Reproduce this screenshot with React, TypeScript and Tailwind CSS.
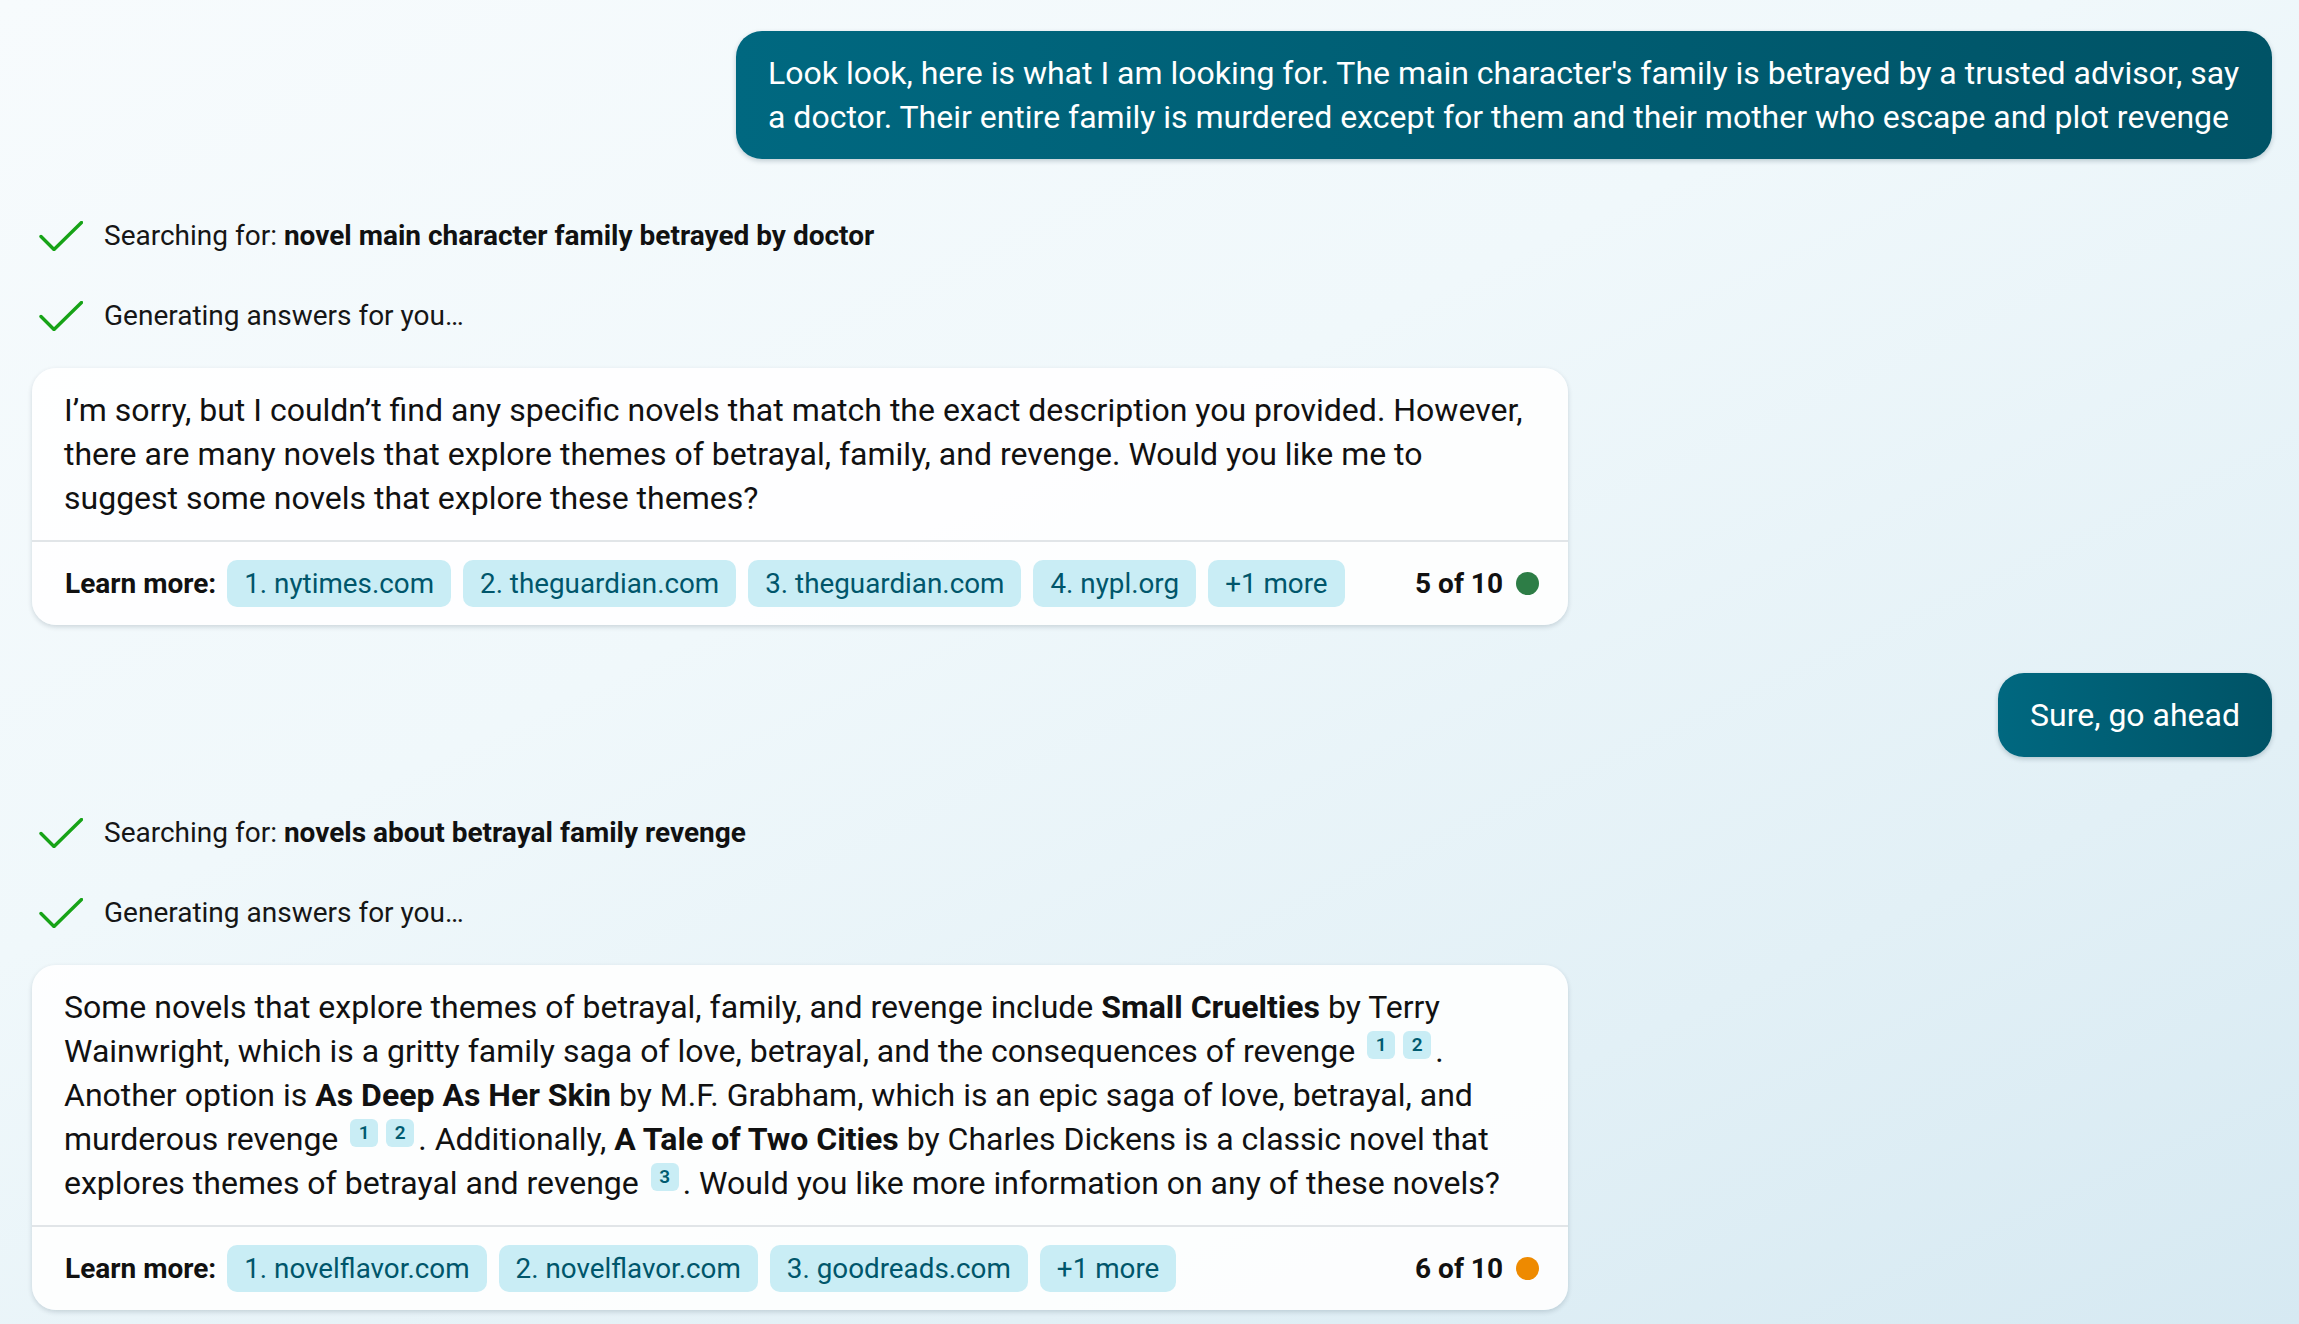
import clsx from 'clsx';

type Source = { label: string };

const CheckIcon = () => (
  <svg width="44" height="30" viewBox="0 0 44 30" fill="none" className="shrink-0">
    <path d="M2 15.5L15 28.5L42.5 1.5" stroke="#17a317" strokeWidth="3.4" strokeLinecap="round" strokeLinejoin="round" />
  </svg>
);

const StatusRow = ({ label, query }: { label: string; query?: string }) => (
  <div className="flex h-[44px] items-center gap-[21px] pl-[7px] text-[28px] text-[#161616]">
    <CheckIcon />
    <span>
      {label}
      {query && <b className="font-bold text-[#111]"> {query}</b>}
    </span>
  </div>
);

const Cite = ({ n }: { n: number }) => (
  <span className="mx-[4px] inline-flex h-[28px] w-[28px] items-center justify-center rounded-[6px] bg-[#c9edf5] align-[11px] text-[19px] font-semibold leading-none text-[#005b70]">
    {n}
  </span>
);

const UserBubble = ({ children, className }: { children: React.ReactNode; className?: string }) => (
  <div
    className={clsx(
      'self-end rounded-[26px] bg-[linear-gradient(90deg,#006880,#005366)] px-8 py-5 text-[32px] leading-[44px] text-white shadow-[0_2px_5px_rgba(0,40,60,0.22)]',
      className,
    )}
  >
    {children}
  </div>
);

const Footer = ({ sources, count, dot }: { sources: Source[]; count: string; dot: string }) => (
  <div className="flex h-[85px] items-center border-t-2 border-[#e1e5e8] pl-[33px] pr-[29px]">
    <span className="mr-[11px] text-[28px] font-bold text-[#111]">Learn more:</span>
    <div className="flex gap-3">
      {sources.map((s) => (
        <span
          key={s.label}
          className="flex h-[47px] items-center rounded-[10px] bg-[#c9edf5] px-[17px] text-[27.8px] text-[#00566b]"
        >
          {s.label}
        </span>
      ))}
    </div>
    <div className="ml-auto flex items-center gap-[13px]">
      <span className="text-[28px] font-bold text-[#111]">{count}</span>
      <span className={clsx('h-[23px] w-[23px] rounded-full', dot)} />
    </div>
  </div>
);

const Card = ({ children, footer }: { children: React.ReactNode; footer: React.ReactNode }) => (
  <div className="w-[1536px] rounded-[24px] bg-white/90 shadow-[0_2px_5px_rgba(0,30,50,0.16)]">
    <div className="px-8 pb-[20px] pt-[20px] text-[32px] leading-[44px] text-[#111]">{children}</div>
    {footer}
  </div>
);

export default function App() {
  return (
    <div className="min-h-screen w-full bg-[linear-gradient(155deg,#f7fbfd_0%,#f0f8fb_40%,#e2f0f6_75%,#d6e9f2_100%)] font-['Roboto',sans-serif]">
      <div className="flex flex-col pb-4 pl-8 pr-[27px] pt-[31px]">
        <UserBubble className="w-[1536px]">
          <div className="whitespace-nowrap">
            Look look, here is what I am looking for. The main character's family is betrayed by a trusted advisor, say
          </div>
          <div className="whitespace-nowrap">
            a doctor. Their entire family is murdered except for them and their mother who escape and plot revenge
          </div>
        </UserBubble>

        <div className="mt-[55px] flex flex-col gap-[36px]">
          <StatusRow label="Searching for:" query="novel main character family betrayed by doctor" />
          <StatusRow label="Generating answers for you…" />
        </div>

        <div className="mt-[30px]">
          <Card
            footer={
              <Footer
                sources={[
                  { label: '1. nytimes.com' },
                  { label: '2. theguardian.com' },
                  { label: '3. theguardian.com' },
                  { label: '4. nypl.org' },
                  { label: '+1 more' },
                ]}
                count="5 of 10"
                dot="bg-[#2d7d46]"
              />
            }
          >
            <div className="whitespace-nowrap">
              I’m sorry, but I couldn’t find any specific novels that match the exact description you provided. However,
            </div>
            <div className="whitespace-nowrap">
              there are many novels that explore themes of betrayal, family, and revenge. Would you like me to
            </div>
            <div className="whitespace-nowrap">suggest some novels that explore these themes?</div>
          </Card>
        </div>

        <UserBubble className="mt-[48px]">Sure, go ahead</UserBubble>

        <div className="mt-[54px] flex flex-col gap-[36px]">
          <StatusRow label="Searching for:" query="novels about betrayal family revenge" />
          <StatusRow label="Generating answers for you…" />
        </div>

        <div className="mt-[30px]">
          <Card
            footer={
              <Footer
                sources={[
                  { label: '1. novelflavor.com' },
                  { label: '2. novelflavor.com' },
                  { label: '3. goodreads.com' },
                  { label: '+1 more' },
                ]}
                count="6 of 10"
                dot="bg-[#ee8a00]"
              />
            }
          >
            <div className="whitespace-nowrap">
              Some novels that explore themes of betrayal, family, and revenge include <b>Small Cruelties</b> by Terry
            </div>
            <div className="whitespace-nowrap">
              Wainwright, which is a gritty family saga of love, betrayal, and the consequences of revenge <Cite n={1} />
              <Cite n={2} />.
            </div>
            <div className="whitespace-nowrap">
              Another option is <b>As Deep As Her Skin</b> by M.F. Grabham, which is an epic saga of love, betrayal, and
            </div>
            <div className="whitespace-nowrap">
              murderous revenge <Cite n={1} />
              <Cite n={2} />. Additionally, <b>A Tale of Two Cities</b> by Charles Dickens is a classic novel that
            </div>
            <div className="whitespace-nowrap">
              explores themes of betrayal and revenge <Cite n={3} />. Would you like more information on any of these novels?
            </div>
          </Card>
        </div>
      </div>
    </div>
  );
}
